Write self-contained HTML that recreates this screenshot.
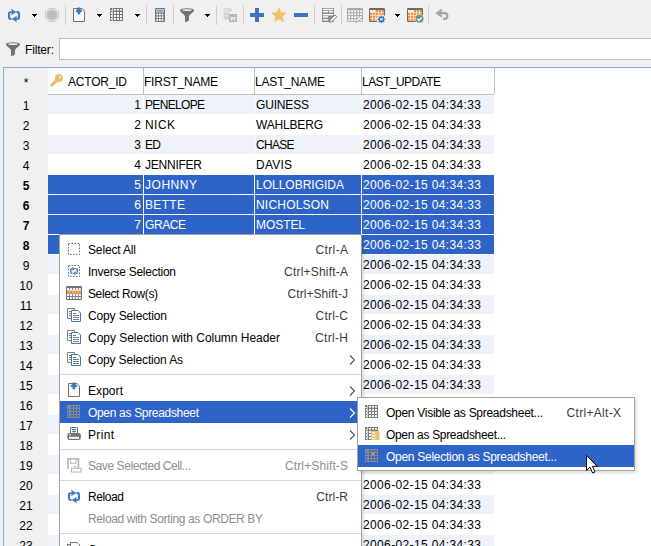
<!DOCTYPE html>
<html><head><meta charset="utf-8"><style>
html,body{margin:0;padding:0;width:651px;height:546px;overflow:hidden;background:#f0f0f0;position:relative}
.t{position:absolute;font-family:"Liberation Sans", sans-serif;white-space:pre;line-height:1}
svg{overflow:visible}
</style></head><body>
<div style="position:absolute;left:0px;top:0px;width:651px;height:67px;background:#f0f0f0;"></div>
<div style="position:absolute;left:65px;top:5px;width:1px;height:20px;background:#cfcfcf;"></div>
<div style="position:absolute;left:146px;top:5px;width:1px;height:20px;background:#cfcfcf;"></div>
<div style="position:absolute;left:173px;top:5px;width:1px;height:20px;background:#cfcfcf;"></div>
<div style="position:absolute;left:216px;top:5px;width:1px;height:20px;background:#cfcfcf;"></div>
<div style="position:absolute;left:243px;top:5px;width:1px;height:20px;background:#cfcfcf;"></div>
<div style="position:absolute;left:314px;top:5px;width:1px;height:20px;background:#cfcfcf;"></div>
<div style="position:absolute;left:341px;top:5px;width:1px;height:20px;background:#cfcfcf;"></div>
<div style="position:absolute;left:428px;top:5px;width:1px;height:20px;background:#cfcfcf;"></div>
<svg style="position:absolute;left:32px;top:14px" width="5" height="3" viewBox="0 0 5 3"><g shape-rendering="crispEdges" fill="#000"><rect x="0" y="0" width="5" height="1"/><rect x="1" y="1" width="3" height="1"/><rect x="2" y="2" width="1" height="1"/></g></svg>
<svg style="position:absolute;left:97px;top:14px" width="5" height="3" viewBox="0 0 5 3"><g shape-rendering="crispEdges" fill="#000"><rect x="0" y="0" width="5" height="1"/><rect x="1" y="1" width="3" height="1"/><rect x="2" y="2" width="1" height="1"/></g></svg>
<svg style="position:absolute;left:135px;top:14px" width="5" height="3" viewBox="0 0 5 3"><g shape-rendering="crispEdges" fill="#000"><rect x="0" y="0" width="5" height="1"/><rect x="1" y="1" width="3" height="1"/><rect x="2" y="2" width="1" height="1"/></g></svg>
<svg style="position:absolute;left:205px;top:14px" width="5" height="3" viewBox="0 0 5 3"><g shape-rendering="crispEdges" fill="#000"><rect x="0" y="0" width="5" height="1"/><rect x="1" y="1" width="3" height="1"/><rect x="2" y="2" width="1" height="1"/></g></svg>
<svg style="position:absolute;left:395px;top:14px" width="5" height="3" viewBox="0 0 5 3"><g shape-rendering="crispEdges" fill="#000"><rect x="0" y="0" width="5" height="1"/><rect x="1" y="1" width="3" height="1"/><rect x="2" y="2" width="1" height="1"/></g></svg>
<svg style="position:absolute;left:8px;top:9px" width="13" height="13" viewBox="0 0 13 13"><g fill="none" stroke="#3f7bc1" stroke-width="2.1"><path d="M3.8 3.2H2.4Q1 3.2 1 4.6V8.6Q1 10 2.4 10H3.4"/><path d="M8.4 3.1H9.6Q11 3.1 11 4.5V8.5Q11 9.9 9.6 9.9H8.2"/></g><path d="M3 -0.2L8.4 3L3 6.2L4 3Z" fill="#3f7bc1"/><path d="M9 6.8L3.6 10L9 13.2L8 10Z" fill="#3f7bc1"/></svg>
<svg style="position:absolute;left:45px;top:8px" width="14" height="14" viewBox="0 0 14 14"><path d="M4.2 0.5H9.8L13.5 4.2V9.8L9.8 13.5H4.2L0.5 9.8V4.2Z" fill="#e6e6e6" stroke="#c4c4c4"/><path d="M4.8 2H9.2L12 4.8V9.2L9.2 12H4.8L2 9.2V4.8Z" fill="#bdbdbd"/></svg>
<svg style="position:absolute;left:73px;top:7px" width="13" height="15" viewBox="0 0 13 15"><path d="M0.5 1.5V14.5H11.5V4.2L9.2 1.5H0.5" fill="#fafafa" stroke="#6e6e6e"/><path d="M5.9 -0.2L9.3 4.1Q9.6 5 8.6 5H7.3V7.2H4.5V5H3.2Q2.2 5 2.5 4.1Z" fill="#3f7bc1"/></svg>
<svg style="position:absolute;left:110px;top:8px" width="13" height="13" viewBox="0 0 13 13"><rect x="0" y="0" width="13" height="13" fill="#747474"/><rect x="2" y="0" width="1" height="13" fill="#cfcfcf"/><rect x="0" y="2" width="3" height="1" fill="#cfcfcf"/><rect x="0.9" y="4" width="1.1" height="2" fill="#fff"/><rect x="0.9" y="7" width="1.1" height="2" fill="#fff"/><rect x="0.9" y="10" width="1.1" height="2" fill="#fff"/><rect x="4" y="1" width="2" height="1.6" fill="#fff"/><rect x="4" y="4" width="2" height="2" fill="#fff"/><rect x="4" y="7" width="2" height="2" fill="#fff"/><rect x="4" y="10" width="2" height="2" fill="#fff"/><rect x="7" y="1" width="2" height="1.6" fill="#fff"/><rect x="7" y="4" width="2" height="2" fill="#fff"/><rect x="7" y="7" width="2" height="2" fill="#fff"/><rect x="7" y="10" width="2" height="2" fill="#fff"/><rect x="10" y="1" width="2" height="1.6" fill="#fff"/><rect x="10" y="4" width="2" height="2" fill="#fff"/><rect x="10" y="7" width="2" height="2" fill="#fff"/><rect x="10" y="10" width="2" height="2" fill="#fff"/></svg>
<svg style="position:absolute;left:155px;top:8px" width="10" height="14" viewBox="0 0 10 14"><rect x="0" y="0" width="10" height="14" rx="1" fill="#727272"/><rect x="1.2" y="1.2" width="7.6" height="3.2" fill="#d8e6f4"/><rect x="2" y="2.3" width="6" height="1.1" fill="#3d7ac4"/><rect x="1.4" y="5.6" width="1.8" height="1.8" fill="#fff"/><rect x="1.4" y="8.4" width="1.8" height="1.8" fill="#fff"/><rect x="1.4" y="11.2" width="1.8" height="1.8" fill="#fff"/><rect x="4.0" y="5.6" width="1.8" height="1.8" fill="#fff"/><rect x="4.0" y="8.4" width="1.8" height="1.8" fill="#fff"/><rect x="4.0" y="11.2" width="1.8" height="1.8" fill="#fff"/><rect x="6.6" y="5.6" width="1.8" height="1.8" fill="#fff"/><rect x="6.6" y="8.4" width="1.8" height="1.8" fill="#fff"/><rect x="6.6" y="11.2" width="1.8" height="1.8" fill="#fff"/></svg>
<svg style="position:absolute;left:180px;top:8px" width="14" height="14" viewBox="0 0 14 14"><path d="M0 2.3C0.3 4.6 5 6.6 5 8.6V13.9C7.6 13.9 9 12.8 9 11.8V8.6C9 6.6 13.7 4.6 14 2.3Z" fill="#737373"/><ellipse cx="7" cy="2.2" rx="7" ry="1.9" fill="#737373"/><ellipse cx="7" cy="2.1" rx="5" ry="0.85" fill="#f6f6f6"/></svg>
<svg style="position:absolute;left:223px;top:8px" width="15" height="14" viewBox="0 0 15 14"><rect x="0.5" y="0.2" width="8.2" height="3.4" rx="1" fill="#d2d2d2"/><rect x="1.6" y="1.3" width="4" height="1.2" fill="#eee"/><rect x="0.5" y="4.2" width="5.5" height="3.4" rx="1" fill="#d2d2d2"/><rect x="0.5" y="8.2" width="5.5" height="3.4" rx="1" fill="#d2d2d2"/><path d="M6 6H14V14H6Z" fill="#f2f2f2"/><path d="M6.8 6.8H13.2V13.2H6.8Z" fill="none" stroke="#b4b4b4" stroke-width="1.6"/><rect x="8" y="7" width="4" height="2.2" fill="#b4b4b4"/><rect x="9.4" y="10.8" width="1.4" height="2.5" fill="#b4b4b4"/></svg>
<svg style="position:absolute;left:250px;top:8px" width="14" height="14" viewBox="0 0 14 14"><rect x="5" y="0" width="4" height="14" fill="#3d74b9"/><rect x="0" y="5" width="14" height="4" fill="#3d74b9"/></svg>
<svg style="position:absolute;left:272px;top:8px" width="14" height="14" viewBox="0 0 14 14"><path d="M7.00 0.00L9.17 4.41L14.04 5.11L10.52 8.54L11.35 13.39L7.00 11.10L2.65 13.39L3.48 8.54L-0.04 5.11L4.83 4.41Z" fill="#f0c46a" stroke="#f0c46a" stroke-width="0.8" stroke-linejoin="round"/></svg>
<svg style="position:absolute;left:294px;top:13px" width="14" height="4" viewBox="0 0 14 4"><rect x="0" y="0" width="14" height="4" fill="#3d74b9"/></svg>
<svg style="position:absolute;left:322px;top:8px" width="15" height="15" viewBox="0 0 15 15"><rect x="0" y="0" width="12" height="14" fill="#8c8c8c"/><rect x="1" y="0.8" width="10" height="1.4" fill="#fff"/><rect x="1" y="3" width="5" height="1.4" fill="#fff"/><rect x="7" y="3" width="4" height="1.4" fill="#fff"/><rect x="1" y="6" width="10" height="1.4" fill="#fff"/><rect x="1" y="8.2" width="5" height="1.4" fill="#fff"/><rect x="1" y="11.1" width="5" height="1.4" fill="#fff"/><path d="M7.5 14.5L8.2 11.8L13 7L14.8 8.8L10 13.6Z" fill="#f0f0f0" stroke="#8c8c8c" stroke-width="1"/></svg>
<svg style="position:absolute;left:347px;top:8px" width="16" height="14" viewBox="0 0 16 14"><rect x="0" y="0" width="16" height="14" rx="1" fill="#a8a8a8"/><rect x="1.2" y="2.2" width="2" height="2" fill="#fff"/><rect x="1.2" y="5.2" width="2" height="2" fill="#fff"/><rect x="1.2" y="8.2" width="2" height="2" fill="#fff"/><rect x="1.2" y="11.2" width="2" height="2" fill="#fff"/><rect x="4.2" y="2.2" width="2" height="2" fill="#fff"/><rect x="4.2" y="5.2" width="2" height="2" fill="#fff"/><rect x="4.2" y="8.2" width="2" height="2" fill="#fff"/><rect x="4.2" y="11.2" width="2" height="2" fill="#fff"/><rect x="7.2" y="2.2" width="2" height="2" fill="#fff"/><rect x="7.2" y="5.2" width="2" height="2" fill="#fff"/><rect x="7.2" y="8.2" width="2" height="2" fill="#fff"/><rect x="7.2" y="11.2" width="2" height="2" fill="#fff"/><rect x="10.2" y="2.2" width="2" height="2" fill="#fff"/><rect x="10.2" y="5.2" width="2" height="2" fill="#fff"/><rect x="10.2" y="8.2" width="2" height="2" fill="#fff"/><rect x="10.2" y="11.2" width="2" height="2" fill="#fff"/><rect x="13.2" y="2.2" width="2" height="2" fill="#fff"/><rect x="13.2" y="5.2" width="2" height="2" fill="#fff"/><rect x="13.2" y="8.2" width="2" height="2" fill="#fff"/><rect x="13.2" y="11.2" width="2" height="2" fill="#fff"/><path d="M8.5 14.5L9.2 11.8L14 7L15.8 8.8L11 13.6Z" fill="#f0f0f0" stroke="#a8a8a8" stroke-width="1"/></svg>
<svg style="position:absolute;left:369px;top:8px" width="17" height="15" viewBox="0 0 17 15"><rect x="0" y="0" width="16" height="14" rx="1.2" fill="#6a6a6a"/><rect x="1" y="2" width="14" height="11" fill="#fbd9bb"/><rect x="1" y="2.1" width="2" height="1.9" fill="#fff"/><rect x="1" y="5" width="2" height="1.9" fill="#f28c3a"/><rect x="1" y="8" width="2" height="1.9" fill="#f28c3a"/><rect x="1" y="10.9" width="2" height="1.9" fill="#f28c3a"/><rect x="4.05" y="2.1" width="2" height="1.9" fill="#fff"/><rect x="4.05" y="5" width="2" height="1.9" fill="#f28c3a"/><rect x="4.05" y="8" width="2" height="1.9" fill="#f28c3a"/><rect x="4.05" y="10.9" width="2" height="1.9" fill="#f28c3a"/><rect x="7" y="2.1" width="2" height="1.9" fill="#f28c3a"/><rect x="7" y="5" width="2" height="1.9" fill="#f28c3a"/><rect x="7" y="8" width="2" height="1.9" fill="#f28c3a"/><rect x="7" y="10.9" width="2" height="1.9" fill="#f28c3a"/><rect x="10" y="2.1" width="2" height="1.9" fill="#f28c3a"/><rect x="10" y="5" width="2" height="1.9" fill="#f28c3a"/><rect x="10" y="8" width="2" height="1.9" fill="#f28c3a"/><rect x="10" y="10.9" width="2" height="1.9" fill="#f28c3a"/><rect x="13" y="2.1" width="2" height="1.9" fill="#f28c3a"/><rect x="13" y="5" width="2" height="1.9" fill="#f28c3a"/><rect x="13" y="8" width="2" height="1.9" fill="#f28c3a"/><rect x="13" y="10.9" width="2" height="1.9" fill="#f28c3a"/><circle cx="12.4" cy="11.3" r="4.9" fill="#f0f0f0"/><path d="M15.23 10.68L16.26 10.77L16.26 11.83L15.23 11.92L14.84 12.86L15.51 13.65L14.75 14.41L13.96 13.74L13.02 14.13L12.93 15.16L11.87 15.16L11.78 14.13L10.84 13.74L10.05 14.41L9.29 13.65L9.96 12.86L9.57 11.92L8.54 11.83L8.54 10.77L9.57 10.68L9.96 9.74L9.29 8.95L10.05 8.19L10.84 8.86L11.78 8.47L11.87 7.44L12.93 7.44L13.02 8.47L13.96 8.86L14.75 8.19L15.51 8.95L14.84 9.74Z" fill="#3a76c4"/><circle cx="12.4" cy="11.3" r="1.2" fill="#f0f0f0"/></svg>
<svg style="position:absolute;left:407px;top:8px" width="17" height="15" viewBox="0 0 17 15"><rect x="0" y="0" width="16" height="14" rx="1.2" fill="#6a6a6a"/><rect x="1" y="2" width="14" height="11" fill="#fbd9bb"/><rect x="1" y="2.1" width="2" height="1.9" fill="#fff"/><rect x="1" y="5" width="2" height="1.9" fill="#f28c3a"/><rect x="1" y="8" width="2" height="1.9" fill="#f28c3a"/><rect x="1" y="10.9" width="2" height="1.9" fill="#f28c3a"/><rect x="4.05" y="2.1" width="2" height="1.9" fill="#fff"/><rect x="4.05" y="5" width="2" height="1.9" fill="#f28c3a"/><rect x="4.05" y="8" width="2" height="1.9" fill="#f28c3a"/><rect x="4.05" y="10.9" width="2" height="1.9" fill="#f28c3a"/><rect x="7" y="2.1" width="2" height="1.9" fill="#f28c3a"/><rect x="7" y="5" width="2" height="1.9" fill="#f28c3a"/><rect x="7" y="8" width="2" height="1.9" fill="#f28c3a"/><rect x="7" y="10.9" width="2" height="1.9" fill="#f28c3a"/><rect x="10" y="2.1" width="2" height="1.9" fill="#f28c3a"/><rect x="10" y="5" width="2" height="1.9" fill="#f28c3a"/><rect x="10" y="8" width="2" height="1.9" fill="#f28c3a"/><rect x="10" y="10.9" width="2" height="1.9" fill="#f28c3a"/><rect x="13" y="2.1" width="2" height="1.9" fill="#f28c3a"/><rect x="13" y="5" width="2" height="1.9" fill="#f28c3a"/><rect x="13" y="8" width="2" height="1.9" fill="#f28c3a"/><rect x="13" y="10.9" width="2" height="1.9" fill="#f28c3a"/><circle cx="12.5" cy="10.8" r="4.6" fill="#f0f0f0"/><circle cx="12.5" cy="10.8" r="4" fill="#5c9a80"/><path d="M10.3 10.8L12 12.5L14.8 9.4" fill="none" stroke="#fff" stroke-width="1.4"/></svg>
<svg style="position:absolute;left:436px;top:9px" width="13" height="12" viewBox="0 0 13 12"><path d="M6 0.8L1.2 4.2L6 7.6" fill="none" stroke="#a4a4a4" stroke-width="2.2" stroke-linejoin="miter"/><path d="M1.5 4.2H8.6A2.8 2.8 0 0 1 8.6 9.8H7" fill="none" stroke="#a4a4a4" stroke-width="2.2"/></svg>
<svg style="position:absolute;left:6px;top:42px" width="15" height="14" viewBox="0 0 15 14"><path d="M0 2.3C0.3 4.6 5 6.6 5 8.6V13.9C7.6 13.9 9 12.8 9 11.8V8.6C9 6.6 13.7 4.6 14 2.3Z" fill="#737373"/><ellipse cx="7" cy="2.2" rx="7" ry="1.9" fill="#737373"/><ellipse cx="7" cy="2.1" rx="5" ry="0.85" fill="#f6f6f6"/></svg>
<div class="t" style="left:25px;top:44px;font-size:12px;color:#000;font-weight:normal;letter-spacing:-0.167px">Filter:</div>
<div style="position:absolute;left:59px;top:38px;width:592px;height:22px;background:#fff;box-sizing:border-box;border:1px solid #bdbdbd;border-right:none"></div>
<div style="position:absolute;left:3px;top:67px;width:648px;height:1px;background:#86aedd;"></div>
<div style="position:absolute;left:3px;top:67px;width:1px;height:479px;background:#86aedd;"></div>
<div style="position:absolute;left:4px;top:68px;width:44px;height:478px;background:#f0f0f0;"></div>
<div style="position:absolute;left:48px;top:68px;width:603px;height:26px;background:#fff;"></div>
<div style="position:absolute;left:48px;top:94px;width:447px;height:1px;background:#bfbfbf;"></div>
<div style="position:absolute;left:143px;top:68px;width:1px;height:27px;background:#bfbfbf;"></div>
<div style="position:absolute;left:254px;top:68px;width:1px;height:27px;background:#bfbfbf;"></div>
<div style="position:absolute;left:361px;top:68px;width:1px;height:27px;background:#bfbfbf;"></div>
<div style="position:absolute;left:494px;top:68px;width:1px;height:27px;background:#bfbfbf;"></div>
<div style="position:absolute;left:494px;top:94px;width:157px;height:452px;background:#fff;"></div>
<div class="t" style="left:23.66px;top:77px;font-size:12px;color:#000;font-weight:normal;letter-spacing:0.000px">*</div>
<svg style="position:absolute;left:50px;top:73px" width="14" height="14" viewBox="0 0 14 14"><circle cx="9" cy="5" r="4" fill="#eabf69"/><rect x="9.3" y="3.3" width="1.6" height="1.6" fill="#fff"/><path d="M6.5 7.5L1.8 12.2" stroke="#eabf69" stroke-width="3.2" stroke-linecap="round"/></svg>
<div class="t" style="left:68px;top:76px;font-size:12px;color:#000;font-weight:normal;letter-spacing:-0.210px">ACTOR_ID</div>
<div class="t" style="left:144px;top:76px;font-size:12px;color:#000;font-weight:normal;letter-spacing:-0.224px">FIRST_NAME</div>
<div class="t" style="left:255px;top:76px;font-size:12px;color:#000;font-weight:normal;letter-spacing:-0.170px">LAST_NAME</div>
<div class="t" style="left:362px;top:76px;font-size:12px;color:#000;font-weight:normal;letter-spacing:-0.547px">LAST_UPDATE</div>
<div style="position:absolute;left:48px;top:95px;width:446px;height:451px;background:#fff;"></div>
<div style="position:absolute;left:48px;top:95px;width:446px;height:19px;background:#eef3f9;"></div>
<div style="position:absolute;left:143px;top:95px;width:1px;height:19px;background:#fff;"></div>
<div style="position:absolute;left:254px;top:95px;width:1px;height:19px;background:#fff;"></div>
<div style="position:absolute;left:361px;top:95px;width:1px;height:19px;background:#fff;"></div>
<div class="t" style="left:22.66px;top:100px;font-size:12px;color:#000;font-weight:normal;letter-spacing:0.000px">1</div>
<div class="t" style="left:134.31px;top:99px;font-size:12px;color:#000;font-weight:normal;letter-spacing:0.000px">1</div>
<div class="t" style="left:145px;top:99px;font-size:12px;color:#000;font-weight:normal;letter-spacing:-0.672px">PENELOPE</div>
<div class="t" style="left:256px;top:99px;font-size:12px;color:#000;font-weight:normal;letter-spacing:-0.169px">GUINESS</div>
<div class="t" style="left:363px;top:99px;font-size:12px;color:#000;font-weight:normal;letter-spacing:0.365px">2006-02-15 04:34:33</div>
<div style="position:absolute;left:48px;top:115px;width:446px;height:19px;background:#fff;"></div>
<div style="position:absolute;left:143px;top:115px;width:1px;height:19px;background:#fff;"></div>
<div style="position:absolute;left:254px;top:115px;width:1px;height:19px;background:#fff;"></div>
<div style="position:absolute;left:361px;top:115px;width:1px;height:19px;background:#fff;"></div>
<div class="t" style="left:22.66px;top:120px;font-size:12px;color:#000;font-weight:normal;letter-spacing:0.000px">2</div>
<div class="t" style="left:134.31px;top:119px;font-size:12px;color:#000;font-weight:normal;letter-spacing:0.000px">2</div>
<div class="t" style="left:145px;top:119px;font-size:12px;color:#000;font-weight:normal;letter-spacing:0.443px">NICK</div>
<div class="t" style="left:256px;top:119px;font-size:12px;color:#000;font-weight:normal;letter-spacing:-0.176px">WAHLBERG</div>
<div class="t" style="left:363px;top:119px;font-size:12px;color:#000;font-weight:normal;letter-spacing:0.365px">2006-02-15 04:34:33</div>
<div style="position:absolute;left:48px;top:135px;width:446px;height:19px;background:#eef3f9;"></div>
<div style="position:absolute;left:143px;top:135px;width:1px;height:19px;background:#fff;"></div>
<div style="position:absolute;left:254px;top:135px;width:1px;height:19px;background:#fff;"></div>
<div style="position:absolute;left:361px;top:135px;width:1px;height:19px;background:#fff;"></div>
<div class="t" style="left:22.66px;top:140px;font-size:12px;color:#000;font-weight:normal;letter-spacing:0.000px">3</div>
<div class="t" style="left:134.31px;top:139px;font-size:12px;color:#000;font-weight:normal;letter-spacing:0.000px">3</div>
<div class="t" style="left:145px;top:139px;font-size:12px;color:#000;font-weight:normal;letter-spacing:-0.672px">ED</div>
<div class="t" style="left:256px;top:139px;font-size:12px;color:#000;font-weight:normal;letter-spacing:-0.711px">CHASE</div>
<div class="t" style="left:363px;top:139px;font-size:12px;color:#000;font-weight:normal;letter-spacing:0.365px">2006-02-15 04:34:33</div>
<div style="position:absolute;left:48px;top:155px;width:446px;height:19px;background:#fff;"></div>
<div style="position:absolute;left:143px;top:155px;width:1px;height:19px;background:#fff;"></div>
<div style="position:absolute;left:254px;top:155px;width:1px;height:19px;background:#fff;"></div>
<div style="position:absolute;left:361px;top:155px;width:1px;height:19px;background:#fff;"></div>
<div class="t" style="left:22.66px;top:160px;font-size:12px;color:#000;font-weight:normal;letter-spacing:0.000px">4</div>
<div class="t" style="left:134.31px;top:159px;font-size:12px;color:#000;font-weight:normal;letter-spacing:0.000px">4</div>
<div class="t" style="left:145px;top:159px;font-size:12px;color:#000;font-weight:normal;letter-spacing:-0.239px">JENNIFER</div>
<div class="t" style="left:256px;top:159px;font-size:12px;color:#000;font-weight:normal;letter-spacing:0.219px">DAVIS</div>
<div class="t" style="left:363px;top:159px;font-size:12px;color:#000;font-weight:normal;letter-spacing:0.365px">2006-02-15 04:34:33</div>
<div style="position:absolute;left:48px;top:175px;width:446px;height:19px;background:#2e64c8;"></div>
<div style="position:absolute;left:143px;top:175px;width:1px;height:19px;background:#fff;"></div>
<div style="position:absolute;left:254px;top:175px;width:1px;height:19px;background:#fff;"></div>
<div style="position:absolute;left:361px;top:175px;width:1px;height:19px;background:#fff;"></div>
<div class="t" style="left:22.66px;top:180px;font-size:12px;color:#000;font-weight:bold;letter-spacing:0.000px">5</div>
<div class="t" style="left:134.31px;top:179px;font-size:12px;color:#fff;font-weight:normal;letter-spacing:0.000px">5</div>
<div class="t" style="left:145px;top:179px;font-size:12px;color:#fff;font-weight:normal;letter-spacing:0.531px">JOHNNY</div>
<div class="t" style="left:256px;top:179px;font-size:12px;color:#fff;font-weight:normal;letter-spacing:-0.003px">LOLLOBRIGIDA</div>
<div class="t" style="left:363px;top:179px;font-size:12px;color:#fff;font-weight:normal;letter-spacing:0.365px">2006-02-15 04:34:33</div>
<div style="position:absolute;left:48px;top:195px;width:446px;height:19px;background:#2e64c8;"></div>
<div style="position:absolute;left:143px;top:195px;width:1px;height:19px;background:#fff;"></div>
<div style="position:absolute;left:254px;top:195px;width:1px;height:19px;background:#fff;"></div>
<div style="position:absolute;left:361px;top:195px;width:1px;height:19px;background:#fff;"></div>
<div class="t" style="left:22.66px;top:200px;font-size:12px;color:#000;font-weight:bold;letter-spacing:0.000px">6</div>
<div class="t" style="left:134.31px;top:199px;font-size:12px;color:#fff;font-weight:normal;letter-spacing:0.000px">6</div>
<div class="t" style="left:145px;top:199px;font-size:12px;color:#fff;font-weight:normal;letter-spacing:0.332px">BETTE</div>
<div class="t" style="left:256px;top:199px;font-size:12px;color:#fff;font-weight:normal;letter-spacing:0.207px">NICHOLSON</div>
<div class="t" style="left:363px;top:199px;font-size:12px;color:#fff;font-weight:normal;letter-spacing:0.365px">2006-02-15 04:34:33</div>
<div style="position:absolute;left:48px;top:215px;width:446px;height:19px;background:#2e64c8;"></div>
<div style="position:absolute;left:143px;top:215px;width:1px;height:19px;background:#fff;"></div>
<div style="position:absolute;left:254px;top:215px;width:1px;height:19px;background:#fff;"></div>
<div style="position:absolute;left:361px;top:215px;width:1px;height:19px;background:#fff;"></div>
<div class="t" style="left:22.66px;top:220px;font-size:12px;color:#000;font-weight:bold;letter-spacing:0.000px">7</div>
<div class="t" style="left:134.31px;top:219px;font-size:12px;color:#fff;font-weight:normal;letter-spacing:0.000px">7</div>
<div class="t" style="left:145px;top:219px;font-size:12px;color:#fff;font-weight:normal;letter-spacing:-0.422px">GRACE</div>
<div class="t" style="left:256px;top:219px;font-size:12px;color:#fff;font-weight:normal;letter-spacing:-0.069px">MOSTEL</div>
<div class="t" style="left:363px;top:219px;font-size:12px;color:#fff;font-weight:normal;letter-spacing:0.365px">2006-02-15 04:34:33</div>
<div style="position:absolute;left:48px;top:235px;width:446px;height:19px;background:#2e64c8;"></div>
<div style="position:absolute;left:143px;top:235px;width:1px;height:19px;background:#fff;"></div>
<div style="position:absolute;left:254px;top:235px;width:1px;height:19px;background:#fff;"></div>
<div style="position:absolute;left:361px;top:235px;width:1px;height:19px;background:#fff;"></div>
<div class="t" style="left:22.66px;top:240px;font-size:12px;color:#000;font-weight:bold;letter-spacing:0.000px">8</div>
<div class="t" style="left:134.31px;top:239px;font-size:12px;color:#fff;font-weight:normal;letter-spacing:0.000px">8</div>
<div class="t" style="left:145px;top:239px;font-size:12px;color:#fff;font-weight:normal;letter-spacing:0.000px">MATTHEW</div>
<div class="t" style="left:256px;top:239px;font-size:12px;color:#fff;font-weight:normal;letter-spacing:0.000px">JOHANSSON</div>
<div class="t" style="left:363px;top:239px;font-size:12px;color:#fff;font-weight:normal;letter-spacing:0.365px">2006-02-15 04:34:33</div>
<div style="position:absolute;left:48px;top:255px;width:446px;height:19px;background:#eef3f9;"></div>
<div style="position:absolute;left:143px;top:255px;width:1px;height:19px;background:#fff;"></div>
<div style="position:absolute;left:254px;top:255px;width:1px;height:19px;background:#fff;"></div>
<div style="position:absolute;left:361px;top:255px;width:1px;height:19px;background:#fff;"></div>
<div class="t" style="left:22.66px;top:260px;font-size:12px;color:#000;font-weight:normal;letter-spacing:0.000px">9</div>
<div class="t" style="left:363px;top:259px;font-size:12px;color:#000;font-weight:normal;letter-spacing:0.365px">2006-02-15 04:34:33</div>
<div style="position:absolute;left:48px;top:275px;width:446px;height:19px;background:#fff;"></div>
<div style="position:absolute;left:143px;top:275px;width:1px;height:19px;background:#fff;"></div>
<div style="position:absolute;left:254px;top:275px;width:1px;height:19px;background:#fff;"></div>
<div style="position:absolute;left:361px;top:275px;width:1px;height:19px;background:#fff;"></div>
<div class="t" style="left:19.32px;top:280px;font-size:12px;color:#000;font-weight:normal;letter-spacing:0.000px">10</div>
<div class="t" style="left:363px;top:279px;font-size:12px;color:#000;font-weight:normal;letter-spacing:0.365px">2006-02-15 04:34:33</div>
<div style="position:absolute;left:48px;top:295px;width:446px;height:19px;background:#eef3f9;"></div>
<div style="position:absolute;left:143px;top:295px;width:1px;height:19px;background:#fff;"></div>
<div style="position:absolute;left:254px;top:295px;width:1px;height:19px;background:#fff;"></div>
<div style="position:absolute;left:361px;top:295px;width:1px;height:19px;background:#fff;"></div>
<div class="t" style="left:19.77px;top:300px;font-size:12px;color:#000;font-weight:normal;letter-spacing:0.000px">11</div>
<div class="t" style="left:363px;top:299px;font-size:12px;color:#000;font-weight:normal;letter-spacing:0.365px">2006-02-15 04:34:33</div>
<div style="position:absolute;left:48px;top:315px;width:446px;height:19px;background:#fff;"></div>
<div style="position:absolute;left:143px;top:315px;width:1px;height:19px;background:#fff;"></div>
<div style="position:absolute;left:254px;top:315px;width:1px;height:19px;background:#fff;"></div>
<div style="position:absolute;left:361px;top:315px;width:1px;height:19px;background:#fff;"></div>
<div class="t" style="left:19.32px;top:320px;font-size:12px;color:#000;font-weight:normal;letter-spacing:0.000px">12</div>
<div class="t" style="left:363px;top:319px;font-size:12px;color:#000;font-weight:normal;letter-spacing:0.365px">2006-02-15 04:34:33</div>
<div style="position:absolute;left:48px;top:335px;width:446px;height:19px;background:#eef3f9;"></div>
<div style="position:absolute;left:143px;top:335px;width:1px;height:19px;background:#fff;"></div>
<div style="position:absolute;left:254px;top:335px;width:1px;height:19px;background:#fff;"></div>
<div style="position:absolute;left:361px;top:335px;width:1px;height:19px;background:#fff;"></div>
<div class="t" style="left:19.32px;top:340px;font-size:12px;color:#000;font-weight:normal;letter-spacing:0.000px">13</div>
<div class="t" style="left:363px;top:339px;font-size:12px;color:#000;font-weight:normal;letter-spacing:0.365px">2006-02-15 04:34:33</div>
<div style="position:absolute;left:48px;top:355px;width:446px;height:19px;background:#fff;"></div>
<div style="position:absolute;left:143px;top:355px;width:1px;height:19px;background:#fff;"></div>
<div style="position:absolute;left:254px;top:355px;width:1px;height:19px;background:#fff;"></div>
<div style="position:absolute;left:361px;top:355px;width:1px;height:19px;background:#fff;"></div>
<div class="t" style="left:19.32px;top:360px;font-size:12px;color:#000;font-weight:normal;letter-spacing:0.000px">14</div>
<div class="t" style="left:363px;top:359px;font-size:12px;color:#000;font-weight:normal;letter-spacing:0.365px">2006-02-15 04:34:33</div>
<div style="position:absolute;left:48px;top:375px;width:446px;height:19px;background:#eef3f9;"></div>
<div style="position:absolute;left:143px;top:375px;width:1px;height:19px;background:#fff;"></div>
<div style="position:absolute;left:254px;top:375px;width:1px;height:19px;background:#fff;"></div>
<div style="position:absolute;left:361px;top:375px;width:1px;height:19px;background:#fff;"></div>
<div class="t" style="left:19.32px;top:380px;font-size:12px;color:#000;font-weight:normal;letter-spacing:0.000px">15</div>
<div class="t" style="left:363px;top:379px;font-size:12px;color:#000;font-weight:normal;letter-spacing:0.365px">2006-02-15 04:34:33</div>
<div style="position:absolute;left:48px;top:395px;width:446px;height:19px;background:#fff;"></div>
<div style="position:absolute;left:143px;top:395px;width:1px;height:19px;background:#fff;"></div>
<div style="position:absolute;left:254px;top:395px;width:1px;height:19px;background:#fff;"></div>
<div style="position:absolute;left:361px;top:395px;width:1px;height:19px;background:#fff;"></div>
<div class="t" style="left:19.32px;top:400px;font-size:12px;color:#000;font-weight:normal;letter-spacing:0.000px">16</div>
<div class="t" style="left:363px;top:399px;font-size:12px;color:#000;font-weight:normal;letter-spacing:0.365px">2006-02-15 04:34:33</div>
<div style="position:absolute;left:48px;top:415px;width:446px;height:19px;background:#eef3f9;"></div>
<div style="position:absolute;left:143px;top:415px;width:1px;height:19px;background:#fff;"></div>
<div style="position:absolute;left:254px;top:415px;width:1px;height:19px;background:#fff;"></div>
<div style="position:absolute;left:361px;top:415px;width:1px;height:19px;background:#fff;"></div>
<div class="t" style="left:19.32px;top:420px;font-size:12px;color:#000;font-weight:normal;letter-spacing:0.000px">17</div>
<div class="t" style="left:363px;top:419px;font-size:12px;color:#000;font-weight:normal;letter-spacing:0.365px">2006-02-15 04:34:33</div>
<div style="position:absolute;left:48px;top:435px;width:446px;height:19px;background:#fff;"></div>
<div style="position:absolute;left:143px;top:435px;width:1px;height:19px;background:#fff;"></div>
<div style="position:absolute;left:254px;top:435px;width:1px;height:19px;background:#fff;"></div>
<div style="position:absolute;left:361px;top:435px;width:1px;height:19px;background:#fff;"></div>
<div class="t" style="left:19.32px;top:440px;font-size:12px;color:#000;font-weight:normal;letter-spacing:0.000px">18</div>
<div class="t" style="left:363px;top:439px;font-size:12px;color:#000;font-weight:normal;letter-spacing:0.365px">2006-02-15 04:34:33</div>
<div style="position:absolute;left:48px;top:455px;width:446px;height:19px;background:#eef3f9;"></div>
<div style="position:absolute;left:143px;top:455px;width:1px;height:19px;background:#fff;"></div>
<div style="position:absolute;left:254px;top:455px;width:1px;height:19px;background:#fff;"></div>
<div style="position:absolute;left:361px;top:455px;width:1px;height:19px;background:#fff;"></div>
<div class="t" style="left:19.32px;top:460px;font-size:12px;color:#000;font-weight:normal;letter-spacing:0.000px">19</div>
<div class="t" style="left:363px;top:459px;font-size:12px;color:#000;font-weight:normal;letter-spacing:0.365px">2006-02-15 04:34:33</div>
<div style="position:absolute;left:48px;top:475px;width:446px;height:19px;background:#fff;"></div>
<div style="position:absolute;left:143px;top:475px;width:1px;height:19px;background:#fff;"></div>
<div style="position:absolute;left:254px;top:475px;width:1px;height:19px;background:#fff;"></div>
<div style="position:absolute;left:361px;top:475px;width:1px;height:19px;background:#fff;"></div>
<div class="t" style="left:19.32px;top:480px;font-size:12px;color:#000;font-weight:normal;letter-spacing:0.000px">20</div>
<div class="t" style="left:363px;top:479px;font-size:12px;color:#000;font-weight:normal;letter-spacing:0.365px">2006-02-15 04:34:33</div>
<div style="position:absolute;left:48px;top:495px;width:446px;height:19px;background:#eef3f9;"></div>
<div style="position:absolute;left:143px;top:495px;width:1px;height:19px;background:#fff;"></div>
<div style="position:absolute;left:254px;top:495px;width:1px;height:19px;background:#fff;"></div>
<div style="position:absolute;left:361px;top:495px;width:1px;height:19px;background:#fff;"></div>
<div class="t" style="left:19.32px;top:500px;font-size:12px;color:#000;font-weight:normal;letter-spacing:0.000px">21</div>
<div class="t" style="left:363px;top:499px;font-size:12px;color:#000;font-weight:normal;letter-spacing:0.365px">2006-02-15 04:34:33</div>
<div style="position:absolute;left:48px;top:515px;width:446px;height:19px;background:#fff;"></div>
<div style="position:absolute;left:143px;top:515px;width:1px;height:19px;background:#fff;"></div>
<div style="position:absolute;left:254px;top:515px;width:1px;height:19px;background:#fff;"></div>
<div style="position:absolute;left:361px;top:515px;width:1px;height:19px;background:#fff;"></div>
<div class="t" style="left:19.32px;top:520px;font-size:12px;color:#000;font-weight:normal;letter-spacing:0.000px">22</div>
<div class="t" style="left:363px;top:519px;font-size:12px;color:#000;font-weight:normal;letter-spacing:0.365px">2006-02-15 04:34:33</div>
<div style="position:absolute;left:48px;top:535px;width:446px;height:19px;background:#eef3f9;"></div>
<div style="position:absolute;left:143px;top:535px;width:1px;height:19px;background:#fff;"></div>
<div style="position:absolute;left:254px;top:535px;width:1px;height:19px;background:#fff;"></div>
<div style="position:absolute;left:361px;top:535px;width:1px;height:19px;background:#fff;"></div>
<div class="t" style="left:19.32px;top:540px;font-size:12px;color:#000;font-weight:normal;letter-spacing:0.000px">23</div>
<div class="t" style="left:363px;top:539px;font-size:12px;color:#000;font-weight:normal;letter-spacing:0.365px">2006-02-15 04:34:33</div>
<div style="position:absolute;left:61px;top:236px;width:303px;height:322px;background:rgba(0,0,0,0.12);filter:blur(1.5px)"></div>
<div style="position:absolute;left:59px;top:234px;width:303px;height:312px;background:#fff;box-sizing:border-box;border:1px solid #a0a0a0;border-bottom:none"></div>
<div style="position:absolute;left:60px;top:374px;width:301px;height:1px;background:#d7d7d7;"></div>
<div style="position:absolute;left:60px;top:449px;width:301px;height:1px;background:#d7d7d7;"></div>
<div style="position:absolute;left:60px;top:480px;width:301px;height:1px;background:#d7d7d7;"></div>
<div style="position:absolute;left:60px;top:533px;width:301px;height:1px;background:#d7d7d7;"></div>
<div class="t" style="left:88px;top:244px;font-size:12px;color:#000;font-weight:normal;letter-spacing:-0.151px">Select All</div>
<div class="t" style="left:315.50px;top:244px;font-size:12px;color:#3a3a3a;font-weight:normal;letter-spacing:0.366px">Ctrl-A</div>
<svg style="position:absolute;left:67px;top:242px" width="14" height="14" viewBox="0 0 14 14"><rect x="1.5" y="1.5" width="11" height="11" fill="none" stroke="#6a6a6a" stroke-dasharray="1.6 1.4"/></svg>
<div class="t" style="left:88px;top:266px;font-size:12px;color:#000;font-weight:normal;letter-spacing:-0.254px">Inverse Selection</div>
<div class="t" style="left:284.00px;top:266px;font-size:12px;color:#3a3a3a;font-weight:normal;letter-spacing:0.210px">Ctrl+Shift-A</div>
<svg style="position:absolute;left:67px;top:264px" width="14" height="14" viewBox="0 0 14 14"><rect x="1.5" y="1.5" width="11" height="11" fill="none" stroke="#6a6a6a" stroke-dasharray="1.6 1.4"/><g transform="translate(3.2,2.8) scale(0.64)"><g fill="none" stroke="#3f7bc1" stroke-width="2.1"><path d="M3.8 3.2H2.4Q1 3.2 1 4.6V8.6Q1 10 2.4 10H3.4"/><path d="M8.4 3.1H9.6Q11 3.1 11 4.5V8.5Q11 9.9 9.6 9.9H8.2"/></g><path d="M3 -0.2L8.4 3L3 6.2L4 3Z" fill="#3f7bc1"/><path d="M9 6.8L3.6 10L9 13.2L8 10Z" fill="#3f7bc1"/></g></svg>
<div class="t" style="left:88px;top:288px;font-size:12px;color:#000;font-weight:normal;letter-spacing:-0.391px">Select Row(s)</div>
<div class="t" style="left:287.50px;top:288px;font-size:12px;color:#3a3a3a;font-weight:normal;letter-spacing:0.074px">Ctrl+Shift-J</div>
<svg style="position:absolute;left:66px;top:286px" width="16" height="14" viewBox="0 0 16 14"><rect x="0" y="0" width="16" height="14" rx="1.2" fill="#727272"/><rect x="1" y="4.1" width="14" height="3.4" fill="#fbd3ae"/><rect x="1.00" y="2.1" width="2.1" height="2" fill="#fff"/><rect x="1.00" y="5" width="2.1" height="2" fill="#f08a32"/><rect x="1.00" y="8" width="2.1" height="2" fill="#fff"/><rect x="1.00" y="10.9" width="2.1" height="2" fill="#fff"/><rect x="3.93" y="2.1" width="2.1" height="2" fill="#fff"/><rect x="3.93" y="5" width="2.1" height="2" fill="#f08a32"/><rect x="3.93" y="8" width="2.1" height="2" fill="#fff"/><rect x="3.93" y="10.9" width="2.1" height="2" fill="#fff"/><rect x="6.86" y="2.1" width="2.1" height="2" fill="#fff"/><rect x="6.86" y="5" width="2.1" height="2" fill="#f08a32"/><rect x="6.86" y="8" width="2.1" height="2" fill="#fff"/><rect x="6.86" y="10.9" width="2.1" height="2" fill="#fff"/><rect x="9.79" y="2.1" width="2.1" height="2" fill="#fff"/><rect x="9.79" y="5" width="2.1" height="2" fill="#f08a32"/><rect x="9.79" y="8" width="2.1" height="2" fill="#fff"/><rect x="9.79" y="10.9" width="2.1" height="2" fill="#fff"/><rect x="12.72" y="2.1" width="2.1" height="2" fill="#fff"/><rect x="12.72" y="5" width="2.1" height="2" fill="#f08a32"/><rect x="12.72" y="8" width="2.1" height="2" fill="#fff"/><rect x="12.72" y="10.9" width="2.1" height="2" fill="#fff"/></svg>
<div class="t" style="left:88px;top:310px;font-size:12px;color:#000;font-weight:normal;letter-spacing:-0.132px">Copy Selection</div>
<div class="t" style="left:315.50px;top:310px;font-size:12px;color:#3a3a3a;font-weight:normal;letter-spacing:0.234px">Ctrl-C</div>
<svg style="position:absolute;left:67px;top:308px" width="14" height="14" viewBox="0 0 14 14"><path d="M0.5 0.5H7.5V10.5H0.5Z" fill="#fff" stroke="#808080"/><rect x="2" y="3" width="3" height="1" fill="#808080"/><rect x="2" y="5" width="3" height="1" fill="#808080"/><rect x="2" y="7" width="3" height="1" fill="#808080"/><path d="M4.5 2.5H11L13.5 5V13.5H4.5Z" fill="#fff" stroke="#3b78c2"/><rect x="6" y="5" width="3" height="1" fill="#808080"/><rect x="6" y="7" width="6" height="1" fill="#808080"/><rect x="6" y="9" width="6" height="1" fill="#808080"/><rect x="6" y="11" width="6" height="1" fill="#808080"/></svg>
<div class="t" style="left:88px;top:332px;font-size:12px;color:#000;font-weight:normal;letter-spacing:-0.024px">Copy Selection with Column Header</div>
<div class="t" style="left:315.00px;top:332px;font-size:12px;color:#3a3a3a;font-weight:normal;letter-spacing:0.334px">Ctrl-H</div>
<svg style="position:absolute;left:67px;top:330px" width="14" height="14" viewBox="0 0 14 14"><path d="M0.5 0.5H7.5V10.5H0.5Z" fill="#fff" stroke="#808080"/><rect x="2" y="3" width="3" height="1" fill="#808080"/><rect x="2" y="5" width="3" height="1" fill="#808080"/><rect x="2" y="7" width="3" height="1" fill="#808080"/><path d="M4.5 2.5H11L13.5 5V13.5H4.5Z" fill="#fff" stroke="#3b78c2"/><rect x="6" y="5" width="3" height="1" fill="#808080"/><rect x="6" y="7" width="6" height="1" fill="#808080"/><rect x="6" y="9" width="6" height="1" fill="#808080"/><rect x="6" y="11" width="6" height="1" fill="#808080"/></svg>
<div class="t" style="left:88px;top:354px;font-size:12px;color:#000;font-weight:normal;letter-spacing:-0.149px">Copy Selection As</div>
<svg style="position:absolute;left:349px;top:355px" width="7" height="10" viewBox="0 0 7 10"><path d="M1 0.5L5.5 5L1 9.5" fill="none" stroke="#555" stroke-width="1.1"/></svg>
<svg style="position:absolute;left:67px;top:352px" width="14" height="14" viewBox="0 0 14 14"><path d="M0.5 0.5H7.5V10.5H0.5Z" fill="#fff" stroke="#808080"/><rect x="2" y="3" width="3" height="1" fill="#808080"/><rect x="2" y="5" width="3" height="1" fill="#808080"/><rect x="2" y="7" width="3" height="1" fill="#808080"/><path d="M4.5 2.5H11L13.5 5V13.5H4.5Z" fill="#fff" stroke="#3b78c2"/><rect x="6" y="5" width="3" height="1" fill="#808080"/><rect x="6" y="7" width="6" height="1" fill="#808080"/><rect x="6" y="9" width="6" height="1" fill="#808080"/><rect x="6" y="11" width="6" height="1" fill="#808080"/></svg>
<div class="t" style="left:88px;top:385px;font-size:12px;color:#000;font-weight:normal;letter-spacing:0.062px">Export</div>
<svg style="position:absolute;left:349px;top:386px" width="7" height="10" viewBox="0 0 7 10"><path d="M1 0.5L5.5 5L1 9.5" fill="none" stroke="#555" stroke-width="1.1"/></svg>
<svg style="position:absolute;left:68px;top:382px" width="12" height="15" viewBox="0 0 12 15"><path d="M0.5 1.5V14.5H11.5V4.2L9.2 1.5H0.5" fill="#fafafa" stroke="#6e6e6e"/><path d="M5.9 -0.2L9.3 4.1Q9.6 5 8.6 5H7.3V7.2H4.5V5H3.2Q2.2 5 2.5 4.1Z" fill="#3f7bc1"/></svg>
<div style="position:absolute;left:60px;top:401px;width:301px;height:22px;background:#2e64c8;"></div>
<div class="t" style="left:88px;top:407px;font-size:12px;color:#fff;font-weight:normal;letter-spacing:-0.319px">Open as Spreadsheet</div>
<svg style="position:absolute;left:349px;top:408px" width="7" height="10" viewBox="0 0 7 10"><path d="M1 0.5L5.5 5L1 9.5" fill="none" stroke="#fff" stroke-width="1.1"/></svg>
<svg style="position:absolute;left:67px;top:405px" width="14" height="14" viewBox="0 0 14 14"><rect x="0" y="0" width="13" height="13" fill="#8a8a8a"/><rect x="2" y="0" width="1" height="13" fill="#6f86b8"/><rect x="0" y="2" width="3" height="1" fill="#6f86b8"/><rect x="0.9" y="4" width="1.1" height="2" fill="#2e64c8"/><rect x="0.9" y="7" width="1.1" height="2" fill="#2e64c8"/><rect x="0.9" y="10" width="1.1" height="2" fill="#2e64c8"/><rect x="4" y="1" width="2" height="1.6" fill="#2e64c8"/><rect x="4" y="4" width="2" height="2" fill="#2e64c8"/><rect x="4" y="7" width="2" height="2" fill="#2e64c8"/><rect x="4" y="10" width="2" height="2" fill="#2e64c8"/><rect x="7" y="1" width="2" height="1.6" fill="#2e64c8"/><rect x="7" y="4" width="2" height="2" fill="#2e64c8"/><rect x="7" y="7" width="2" height="2" fill="#2e64c8"/><rect x="7" y="10" width="2" height="2" fill="#2e64c8"/><rect x="10" y="1" width="2" height="1.6" fill="#2e64c8"/><rect x="10" y="4" width="2" height="2" fill="#2e64c8"/><rect x="10" y="7" width="2" height="2" fill="#2e64c8"/><rect x="10" y="10" width="2" height="2" fill="#2e64c8"/></svg>
<div class="t" style="left:88px;top:429px;font-size:12px;color:#000;font-weight:normal;letter-spacing:0.328px">Print</div>
<svg style="position:absolute;left:349px;top:430px" width="7" height="10" viewBox="0 0 7 10"><path d="M1 0.5L5.5 5L1 9.5" fill="none" stroke="#555" stroke-width="1.1"/></svg>
<svg style="position:absolute;left:67px;top:427px" width="15" height="14" viewBox="0 0 15 14"><path d="M3.5 6V0.5H10.5V6" fill="#fff" stroke="#727272"/><rect x="4" y="1" width="6" height="5" fill="#fff"/><rect x="5" y="2.1" width="4" height="1.1" rx="0.5" fill="#3d7ac4"/><rect x="5" y="4.1" width="4" height="1.1" rx="0.5" fill="#3d7ac4"/><rect x="0.3" y="6" width="13.5" height="7" rx="2" fill="#727272"/><rect x="2" y="9.8" width="10" height="2" fill="#fff"/><rect x="2" y="7.2" width="2" height="1" fill="#fff"/></svg>
<div class="t" style="left:88px;top:460px;font-size:12px;color:#8d8d8d;font-weight:normal;letter-spacing:-0.420px">Save Selected Cell...</div>
<div class="t" style="left:285.00px;top:460px;font-size:12px;color:#8d8d8d;font-weight:normal;letter-spacing:0.119px">Ctrl+Shift-S</div>
<svg style="position:absolute;left:67px;top:458px" width="15" height="15" viewBox="0 0 15 15"><path d="M1 11V0.8H11.5V11" fill="none" stroke="#b4b4b4" stroke-width="1.6"/><rect x="3.5" y="0.5" width="5.5" height="4.8" fill="none" stroke="#b4b4b4" stroke-width="1"/><rect x="6.5" y="8" width="2.5" height="1" fill="#b4b4b4"/><rect x="4.5" y="10.3" width="9.5" height="3.7" fill="#fff" stroke="#b4b4b4" stroke-width="1"/></svg>
<div class="t" style="left:88px;top:491px;font-size:12px;color:#000;font-weight:normal;letter-spacing:-0.406px">Reload</div>
<div class="t" style="left:316.30px;top:491px;font-size:12px;color:#3a3a3a;font-weight:normal;letter-spacing:0.074px">Ctrl-R</div>
<svg style="position:absolute;left:68px;top:490px" width="13" height="13" viewBox="0 0 13 13"><g fill="none" stroke="#3f7bc1" stroke-width="2.1"><path d="M3.8 3.2H2.4Q1 3.2 1 4.6V8.6Q1 10 2.4 10H3.4"/><path d="M8.4 3.1H9.6Q11 3.1 11 4.5V8.5Q11 9.9 9.6 9.9H8.2"/></g><path d="M3 -0.2L8.4 3L3 6.2L4 3Z" fill="#3f7bc1"/><path d="M9 6.8L3.6 10L9 13.2L8 10Z" fill="#3f7bc1"/></svg>
<div class="t" style="left:88px;top:513px;font-size:12px;color:#8d8d8d;font-weight:normal;letter-spacing:-0.369px">Reload with Sorting as ORDER BY</div>
<div class="t" style="left:88px;top:544px;font-size:12px;color:#000;font-weight:normal;letter-spacing:0.000px">Copy</div>
<svg style="position:absolute;left:67px;top:542px" width="14" height="14" viewBox="0 0 14 14"><path d="M0.5 2.5H7.5V12.5H0.5Z" fill="#fff" stroke="#707070"/><path d="M3.5 0.5H10L12.5 3V11.5H3.5Z" fill="#fff" stroke="#707070"/></svg>
<div style="position:absolute;left:359px;top:399px;width:278px;height:74px;background:rgba(0,0,0,0.12);filter:blur(1.5px)"></div>
<div style="position:absolute;left:357px;top:397px;width:278px;height:74px;background:#fff;box-sizing:border-box;border:1px solid #a0a0a0"></div>
<div class="t" style="left:386px;top:407px;font-size:12px;color:#000;font-weight:normal;letter-spacing:-0.283px">Open Visible as Spreadsheet...</div>
<div class="t" style="left:566.60px;top:407px;font-size:12px;color:#3a3a3a;font-weight:normal;letter-spacing:0.301px">Ctrl+Alt-X</div>
<svg style="position:absolute;left:365px;top:405px" width="14" height="14" viewBox="0 0 14 14"><rect x="0" y="0" width="13" height="13" fill="#7a7a7a"/><rect x="2" y="0" width="1" height="13" fill="#cfcfcf"/><rect x="0" y="2" width="3" height="1" fill="#cfcfcf"/><rect x="0.9" y="4" width="1.1" height="2" fill="#fff"/><rect x="0.9" y="7" width="1.1" height="2" fill="#fff"/><rect x="0.9" y="10" width="1.1" height="2" fill="#fff"/><rect x="4" y="1" width="2" height="1.6" fill="#fff"/><rect x="4" y="4" width="2" height="2" fill="#fff"/><rect x="4" y="7" width="2" height="2" fill="#fff"/><rect x="4" y="10" width="2" height="2" fill="#fff"/><rect x="7" y="1" width="2" height="1.6" fill="#fff"/><rect x="7" y="4" width="2" height="2" fill="#fff"/><rect x="7" y="7" width="2" height="2" fill="#fff"/><rect x="7" y="10" width="2" height="2" fill="#fff"/><rect x="10" y="1" width="2" height="1.6" fill="#fff"/><rect x="10" y="4" width="2" height="2" fill="#fff"/><rect x="10" y="7" width="2" height="2" fill="#fff"/><rect x="10" y="10" width="2" height="2" fill="#fff"/></svg>
<div class="t" style="left:386px;top:429px;font-size:12px;color:#000;font-weight:normal;letter-spacing:-0.321px">Open as Spreadsheet...</div>
<svg style="position:absolute;left:365px;top:427px" width="15" height="15" viewBox="0 0 15 15"><rect x="0" y="0" width="13" height="13" fill="#7a7a7a"/><rect x="2" y="0" width="1" height="13" fill="#cfcfcf"/><rect x="0" y="2" width="3" height="1" fill="#cfcfcf"/><rect x="0.9" y="4" width="1.1" height="2" fill="#fff"/><rect x="0.9" y="7" width="1.1" height="2" fill="#fff"/><rect x="0.9" y="10" width="1.1" height="2" fill="#fff"/><rect x="4" y="1" width="2" height="1.6" fill="#fff"/><rect x="4" y="4" width="2" height="2" fill="#fff"/><rect x="4" y="7" width="2" height="2" fill="#fff"/><rect x="4" y="10" width="2" height="2" fill="#fff"/><rect x="7" y="1" width="2" height="1.6" fill="#fff"/><rect x="7" y="4" width="2" height="2" fill="#fff"/><rect x="7" y="7" width="2" height="2" fill="#fff"/><rect x="7" y="10" width="2" height="2" fill="#fff"/><rect x="10" y="1" width="2" height="1.6" fill="#fff"/><rect x="10" y="4" width="2" height="2" fill="#fff"/><rect x="10" y="7" width="2" height="2" fill="#fff"/><rect x="10" y="10" width="2" height="2" fill="#fff"/><rect x="6" y="4" width="8.5" height="9" rx="1" fill="#e9c36f"/><rect x="7" y="5.3" width="3.5" height="1.1" fill="#fff"/><rect x="7" y="8" width="3.5" height="1.1" fill="#fff"/><rect x="7" y="10.8" width="3.5" height="1.1" fill="#fff"/></svg>
<div style="position:absolute;left:358px;top:445px;width:276px;height:22px;background:#2e64c8;"></div>
<div class="t" style="left:386px;top:451px;font-size:12px;color:#fff;font-weight:normal;letter-spacing:-0.273px">Open Selection as Spreadsheet...</div>
<svg style="position:absolute;left:365px;top:449px" width="14" height="14" viewBox="0 0 14 14"><rect x="0" y="0" width="13" height="13" fill="#8a8a8a"/><rect x="2" y="0" width="1" height="13" fill="#6f86b8"/><rect x="0" y="2" width="3" height="1" fill="#6f86b8"/><rect x="0.9" y="4" width="1.1" height="2" fill="#2e64c8"/><rect x="0.9" y="7" width="1.1" height="2" fill="#2e64c8"/><rect x="0.9" y="10" width="1.1" height="2" fill="#2e64c8"/><rect x="4" y="1" width="2" height="1.6" fill="#2e64c8"/><rect x="4" y="4" width="2" height="2" fill="#2e64c8"/><rect x="4" y="7" width="2" height="2" fill="#2e64c8"/><rect x="4" y="10" width="2" height="2" fill="#2e64c8"/><rect x="7" y="1" width="2" height="1.6" fill="#2e64c8"/><rect x="7" y="4" width="2" height="2" fill="#2e64c8"/><rect x="7" y="7" width="2" height="2" fill="#2e64c8"/><rect x="7" y="10" width="2" height="2" fill="#2e64c8"/><rect x="10" y="1" width="2" height="1.6" fill="#2e64c8"/><rect x="10" y="4" width="2" height="2" fill="#2e64c8"/><rect x="10" y="7" width="2" height="2" fill="#2e64c8"/><rect x="10" y="10" width="2" height="2" fill="#2e64c8"/><rect x="7" y="4" width="2" height="2" fill="#f08a30"/></svg>
<svg style="position:absolute;left:585px;top:454px" width="14" height="21" viewBox="0 0 14 21"><path d="M1.5 1.5V16.5L5 13.2L7.6 19L10 18L7.5 12.3H12.3Z" fill="#fff" stroke="#000" stroke-width="1" stroke-linejoin="round"/></svg>
</body></html>
